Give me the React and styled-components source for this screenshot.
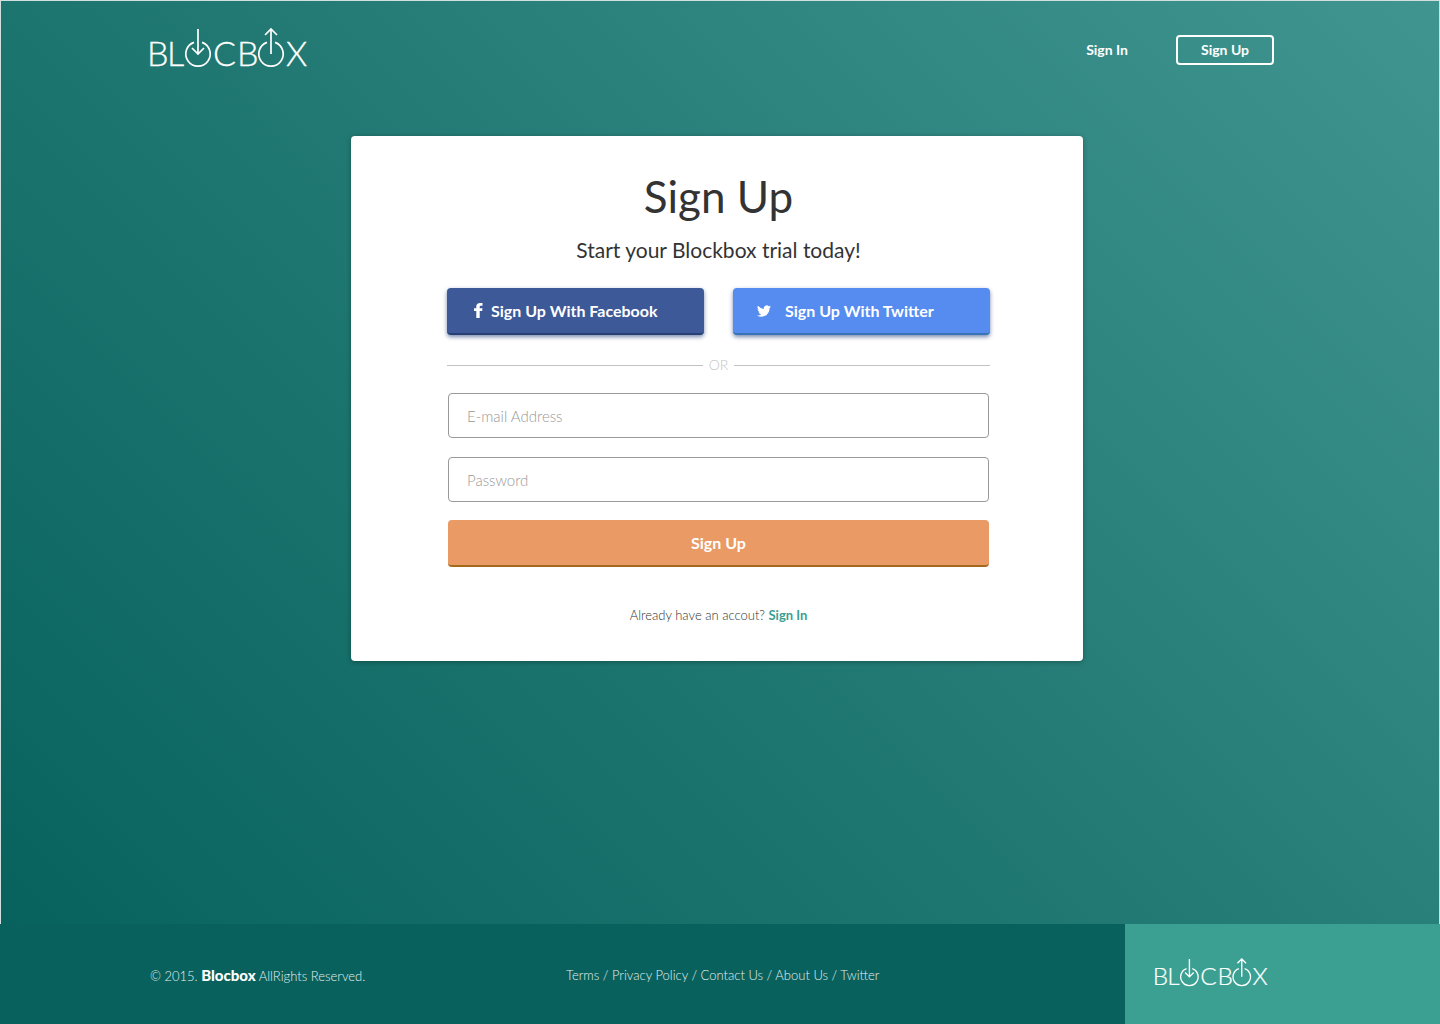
import React from "react";
import styled, { createGlobalStyle } from "styled-components";

const GlobalStyle = createGlobalStyle`
  *, *::before, *::after { box-sizing: border-box; }
  body {
    margin: 0;
    font-family: Lato, "Liberation Sans", sans-serif;
    font-size: 14px;
    line-height: 20px;
    color: #333;
  }
  h1, p { margin: 0; }
  a { color: inherit; text-decoration: none; }
  button, input { font: inherit; }
`;

const Page = styled.div`
  display: flex;
  flex-direction: column;
  min-height: 100vh;
`;

const Hero = styled.div`
  flex: 1;
  border: 1px solid #d3dfde;
  border-bottom: 0;
  background: linear-gradient(45deg, #07625d 0%, #237a74 50%, #409591 100%);
`;

const Header = styled.header`
  display: flex;
  align-items: center;
  justify-content: space-between;
  height: 98px;
  padding: 0 165px 0 149px;
`;

const Nav = styled.nav`
  display: flex;
  align-items: center;
  gap: 48px;
  color: #fff;
  font-weight: 700;
`;

const NavButton = styled.button`
  width: 98px;
  height: 30px;
  padding: 0;
  border: 2px solid #fff;
  border-radius: 4px;
  background: transparent;
  color: #fff;
  font-weight: 700;
  line-height: 20px;
  cursor: pointer;
`;

const Main = styled.main`
  display: flex;
  justify-content: center;
  padding: 37px 6px 48px 0;
`;

const Card = styled.section`
  width: 732px;
  max-width: 100%;
  padding: 30px 93px 36px 96px;
  border-radius: 4px;
  background: #fff;
  box-shadow: 0 1px 5px rgba(0, 0, 0, 0.3);
`;

const Title = styled.h1`
  font-size: 44px;
  font-weight: 400;
  line-height: 60px;
  text-align: center;
`;

const Subtitle = styled.p`
  margin-top: 10px;
  font-size: 21px;
  line-height: 28px;
  text-align: center;
`;

const SocialRow = styled.div`
  display: grid;
  grid-template-columns: 1fr 1fr;
  gap: 29px;
  margin-top: 24px;
`;

const SolidButton = styled.button`
  height: 47px;
  padding: 0;
  border: 0;
  border-bottom: 2px solid ${(p) => p.$edge};
  border-radius: 4px;
  background: ${(p) => p.$fill};
  color: #fff;
  font-size: 16px;
  font-weight: 700;
  cursor: pointer;
`;

const SocialButton = styled(SolidButton)`
  display: flex;
  align-items: center;
  gap: ${(p) => p.$gap};
  padding-left: ${(p) => p.$inset};
  box-shadow: 0 2px 4px rgba(30, 60, 120, 0.6);
`;

const Divider = styled.div`
  display: flex;
  align-items: center;
  gap: 6px;
  margin-top: 20px;
  color: #c4c4c4;
  font-weight: 300;

  &::before,
  &::after {
    content: "";
    flex: 1;
    height: 1px;
    background: #c0c3c3;
  }
`;

const Form = styled.form`
  display: grid;
  gap: 18px;
  margin-top: 18px;
  padding: 0 1px;
`;

const Fields = styled.div`
  display: grid;
  gap: 19px;
`;

const Input = styled.input`
  width: 100%;
  height: 45px;
  padding: 0 18px;
  border: 1px solid #999;
  border-radius: 4px;
  background: #fff;
  color: #333;
  font-size: 15px;
  font-weight: 300;

  &::placeholder {
    color: #999;
    opacity: 1;
  }
`;

const Prompt = styled.p`
  margin-top: 38px;
  font-size: 13px;
  font-weight: 300;
  text-align: center;

  a {
    color: #3ba092;
    font-weight: 700;
  }
`;

const Footer = styled.footer`
  display: grid;
  grid-template-columns: minmax(0, 416fr) minmax(0, 559fr) 315px;
  align-items: center;
  height: 100px;
  padding-left: 150px;
  background: #08615d;
  color: #e4efee;
  font-size: 13px;
  font-weight: 300;

  strong {
    color: #fff;
    font-size: 15px;
    font-weight: 900;
  }
`;

const FooterText = styled.div`
  padding-top: 2px;
`;

const FooterBrand = styled.div`
  display: flex;
  align-items: center;
  align-self: stretch;
  padding-left: 30px;
  background: #3ba092;
`;

const LogoArt = styled.svg`
  display: block;
  flex: none;
  overflow: visible;

  text {
    fill: #fff;
    stroke: #fff;
    stroke-width: 0.3;
    font-family: Lato, "Liberation Sans", sans-serif;
    font-size: 34px;
    font-weight: 300;
  }

  path {
    fill: none;
    stroke: #fff;
    stroke-width: ${(p) => p.$stroke};
  }
`;

function Logo({ width, stroke }) {
  return (
    <LogoArt
      width={width}
      height={Math.round((width * 44) / 159)}
      viewBox="0 0 159 44"
      $stroke={stroke}
      role="img"
      aria-label="Blocbox"
    >
      <text x="-3" y="38">B</text>
      <text x="17" y="38">L</text>
      <path d="M44 14.4A12.2 12.2 0 1 0 52 14.4" />
      <path d="M48 1V26M42 20L48 26L54 20" />
      <text x="63" y="38">C</text>
      <text x="87" y="38">B</text>
      <path d="M117 14.4A12.2 12.2 0 1 0 125 14.4" />
      <path d="M121 26V1M115 7L121 1L127 7" />
      <text x="136" y="38">X</text>
    </LogoArt>
  );
}

function FacebookIcon() {
  return (
    <svg width="9" height="15" viewBox="0 0 9 15" fill="#fff" aria-hidden="true">
      <path d="M2.300 15V8H0V5.200H2.300V3.600C2.300 1.300 3.600 0 6 0H8.500V2.700H7C6 2.700 5.700 3.100 5.700 4V5.200H8.500L8.100 8H5.700V15Z" />
    </svg>
  );
}

function TwitterIcon() {
  return (
    <svg width="14" height="12" viewBox="0 2 24 20" fill="#fff" aria-hidden="true">
      <path d="M24 4.600a10 10 0 0 1-2.800.8 5 5 0 0 0 2.100-2.700 10 10 0 0 1-3.100 1.200 4.900 4.900 0 0 0-8.400 4.500A14 14 0 0 1 1.700 3.100a4.900 4.900 0 0 0 1.500 6.600 5 5 0 0 1-2.200-.6v.1a4.900 4.900 0 0 0 3.900 4.800 5 5 0 0 1-2.200.1 4.900 4.900 0 0 0 4.600 3.400A9.900 9.900 0 0 1 0 19.500a14 14 0 0 0 7.500 2.200c9.100 0 14-7.500 14-14v-.6A10 10 0 0 0 24 4.600z" />
    </svg>
  );
}

const footerLinks = ["Terms", "Privacy Policy", "Contact Us", "About Us", "Twitter"];

export default function App() {
  return (
    <>
      <GlobalStyle />
      <Page>
        <Hero>
          <Header>
            <a href="#home">
              <Logo width={159} stroke="1.7" />
            </a>
            <Nav>
              <a href="#signin">Sign In</a>
              <NavButton type="button">Sign Up</NavButton>
            </Nav>
          </Header>
          <Main>
            <Card>
              <Title>Sign Up</Title>
              <Subtitle>Start your Blockbox trial today!</Subtitle>
              <SocialRow>
                <SocialButton type="button" $fill="#3d5998" $edge="#273f73" $inset="27px" $gap="8px">
                  <FacebookIcon />
                  Sign Up With Facebook
                </SocialButton>
                <SocialButton type="button" $fill="#568cef" $edge="#3674b5" $inset="24px" $gap="14px">
                  <TwitterIcon />
                  Sign Up With Twitter
                </SocialButton>
              </SocialRow>
              <Divider>OR</Divider>
              <Form onSubmit={(e) => e.preventDefault()}>
                <Fields>
                  <Input type="email" placeholder="E-mail Address" aria-label="E-mail Address" />
                  <Input type="password" placeholder="Password" aria-label="Password" />
                </Fields>
                <SolidButton type="submit" $fill="#ea9a64" $edge="#a3691c">
                  Sign Up
                </SolidButton>
              </Form>
              <Prompt>
                Already have an accout? <a href="#signin">Sign In</a>
              </Prompt>
            </Card>
          </Main>
        </Hero>
        <Footer>
          <FooterText>
            © 2015. <strong>Blocbox</strong> AllRights Reserved.
          </FooterText>
          <FooterText as="nav">
            {footerLinks.map((label, i) => (
              <React.Fragment key={label}>
                {i > 0 && " / "}
                <a href="#footer">{label}</a>
              </React.Fragment>
            ))}
          </FooterText>
          <FooterBrand>
            <Logo width={114} stroke="1.9" />
          </FooterBrand>
        </Footer>
      </Page>
    </>
  );
}
